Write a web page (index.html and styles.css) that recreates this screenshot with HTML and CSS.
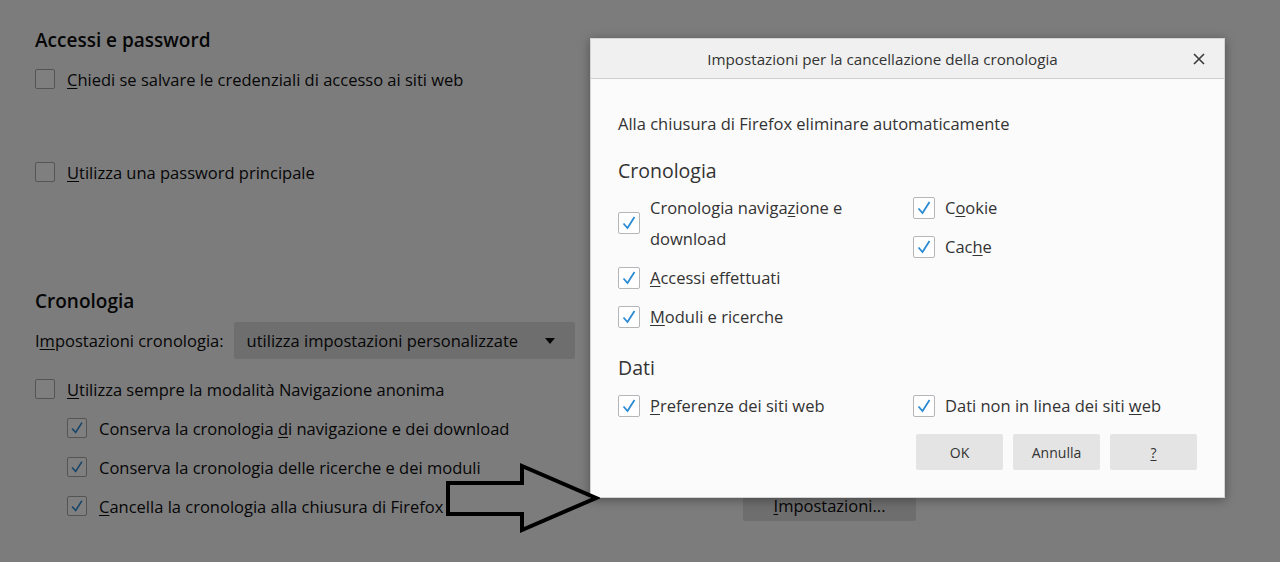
FILE: index.html
```html
<!DOCTYPE html>
<html lang="it">
<head>
    <meta charset="UTF-8">
    <title>Opzioni - Privacy e sicurezza</title>
    <link rel="stylesheet" href="styles.css">
</head>
<body>

<!-- Pagina delle opzioni (sotto la finestra modale) -->
<main class="prefs">
    <h2 class="section-title">Accessi e password</h2>
    <label class="check-row first">
        <span class="box"></span>
        <span><u>C</u>hiedi se salvare le credenziali di accesso ai siti web</span>
    </label>
    <label class="check-row master">
        <span class="box"></span>
        <span><u>U</u>tilizza una password principale</span>
    </label>

    <h2 class="section-title history">Cronologia</h2>
    <div class="history-mode">
        <span>I<u>m</u>postazioni cronologia:</span>
        <div class="select">
            <span>utilizza impostazioni personalizzate</span>
            <span class="caret"></span>
        </div>
    </div>
    <label class="check-row private">
        <span class="box"></span>
        <span><u>U</u>tilizza sempre la modalità Navigazione anonima</span>
    </label>
    <label class="check-row sub">
        <span class="box checked"><svg viewBox="0 0 20 20"><polyline points="4.5,10.5 8.5,15 15.5,4"/></svg></span>
        <span>Conserva la cronologia <u>d</u>i navigazione e dei download</span>
    </label>
    <label class="check-row sub">
        <span class="box checked"><svg viewBox="0 0 20 20"><polyline points="4.5,10.5 8.5,15 15.5,4"/></svg></span>
        <span>Conserva la cronolo<u>g</u>ia delle ricerche e dei moduli</span>
    </label>
    <div class="clear-row">
        <label class="check-row sub">
            <span class="box checked"><svg viewBox="0 0 20 20"><polyline points="4.5,10.5 8.5,15 15.5,4"/></svg></span>
            <span><u>C</u>ancella la cronologia alla chiusura di Firefox</span>
        </label>
        <button class="page-button"><u>I</u>mpostazioni...</button>
    </div>
</main>

<div class="overlay"></div>

<!-- Finestra modale -->
<div class="dialog">
    <div class="dialog-header">
        <span>Impostazioni per la cancellazione della cronologia</span>
        <svg class="close" width="12" height="12" viewBox="0 0 12 12"><path d="M1 1L11 11M11 1L1 11"/></svg>
    </div>
    <div class="dialog-body">
        <p class="intro">Alla chiusura di Firefox eliminare automaticamente</p>

        <h3 class="dialog-title">Cronologia</h3>
        <div class="columns">
            <div class="column">
                <label class="dlg-check">
                    <span class="box checked"><svg viewBox="0 0 20 20"><polyline points="4.5,10.5 8.5,15 15.5,4"/></svg></span>
                    <span>Cronologia naviga<u>z</u>ione e<br>download</span>
                </label>
                <label class="dlg-check">
                    <span class="box checked"><svg viewBox="0 0 20 20"><polyline points="4.5,10.5 8.5,15 15.5,4"/></svg></span>
                    <span><u>A</u>ccessi effettuati</span>
                </label>
                <label class="dlg-check">
                    <span class="box checked"><svg viewBox="0 0 20 20"><polyline points="4.5,10.5 8.5,15 15.5,4"/></svg></span>
                    <span><u>M</u>oduli e ricerche</span>
                </label>
            </div>
            <div class="column">
                <label class="dlg-check">
                    <span class="box checked"><svg viewBox="0 0 20 20"><polyline points="4.5,10.5 8.5,15 15.5,4"/></svg></span>
                    <span>C<u>o</u>okie</span>
                </label>
                <label class="dlg-check">
                    <span class="box checked"><svg viewBox="0 0 20 20"><polyline points="4.5,10.5 8.5,15 15.5,4"/></svg></span>
                    <span>Cac<u>h</u>e</span>
                </label>
            </div>
        </div>

        <h3 class="dialog-title data">Dati</h3>
        <div class="columns data">
            <div class="column">
                <label class="dlg-check">
                    <span class="box checked"><svg viewBox="0 0 20 20"><polyline points="4.5,10.5 8.5,15 15.5,4"/></svg></span>
                    <span><u>P</u>referenze dei siti web</span>
                </label>
            </div>
            <div class="column">
                <label class="dlg-check">
                    <span class="box checked"><svg viewBox="0 0 20 20"><polyline points="4.5,10.5 8.5,15 15.5,4"/></svg></span>
                    <span>Dati non in linea dei siti <u>w</u>eb</span>
                </label>
            </div>
        </div>

        <div class="dialog-buttons">
            <button class="dlg-button">OK</button>
            <button class="dlg-button">Annulla</button>
            <button class="dlg-button"><u>?</u></button>
        </div>
    </div>
</div>

<!-- Freccia disegnata sopra lo screenshot -->
<svg class="arrow" width="160" height="80" viewBox="440 460 160 80">
    <polygon points="448,483 522,483 522,466 596,498 522,530 522,514 448,514"/>
</svg>

</body>
</html>
```

FILE: styles.css
```css
body {
    margin: 0;
    width: 1280px;
    height: 562px;
    overflow: hidden;
    position: relative;
    background-color: #f9f9fa;
    color: #0c0c0d;
    font-family: "Open Sans", "Noto Sans", sans-serif;
    font-size: 16.5px;
}
u {
    text-decoration-thickness: 1px;
    text-underline-offset: 2px;
}

/* pagina */
.prefs {
    padding: 28px 0 0 35px;
    width: 881px;
}
.section-title {
    margin: 0;
    font-size: 19px;
    font-weight: 600;
    line-height: 24px;
}
.section-title.history {
    margin-top: 102px;
}
.check-row {
    display: flex;
    align-items: center;
    height: 30px;
    gap: 12px;
}
.check-row.first {
    margin-top: 12px;
}
.check-row.master {
    margin-top: 63px;
}
.check-row.private {
    margin-top: 15px;
}
.check-row.sub {
    margin-top: 9px;
    margin-left: 32px;
}
.box {
    width: 18px;
    height: 18px;
    border: 1px solid #a8a8ab;
    border-radius: 2px;
    background: #fff;
    flex: none;
    display: flex;
}
.box svg {
    width: 100%;
    height: 100%;
}
.box polyline {
    fill: none;
    stroke: #2b8bd3;
    stroke-width: 1.8;
}
.history-mode {
    display: flex;
    align-items: center;
    gap: 10px;
    margin-top: 9px;
}
.select {
    width: 341px;
    height: 37px;
    box-sizing: border-box;
    display: flex;
    align-items: center;
    justify-content: space-between;
    padding: 0 20px 0 13px;
    background: #dcdcde;
    border-radius: 2px;
}
.caret {
    width: 0;
    height: 0;
    border-left: 5px solid transparent;
    border-right: 5px solid transparent;
    border-top: 6px solid #0c0c0d;
}
.clear-row {
    display: flex;
    align-items: center;
    justify-content: space-between;
}
.page-button {
    width: 173px;
    height: 32px;
    margin-top: 7px;
    border: none;
    border-radius: 2px;
    background: #dcdcde;
    font: inherit;
    color: #0c0c0d;
}

.overlay {
    position: absolute;
    inset: 0;
    background: rgba(0, 0, 0, 0.5);
}

/* finestra */
.dialog {
    position: absolute;
    left: 590px;
    top: 38px;
    width: 635px;
    height: 460px;
    background: #fbfbfb;
    border: 1px solid #d4d4d4;
    box-sizing: border-box;
    box-shadow: 0 2px 10px rgba(0, 0, 0, 0.35);
    color: #333;
}
.dialog-header {
    position: relative;
    height: 40px;
    box-sizing: border-box;
    padding-right: 50px;
    border-bottom: 1px solid #cfcfd1;
    background: #f0f0f0;
    display: flex;
    align-items: center;
    justify-content: center;
    font-size: 15.2px;
}
.close {
    position: absolute;
    right: 19px;
    top: 14px;
}
.close path {
    stroke: #3a3a3a;
    stroke-width: 1.6;
}
.dialog-body {
    padding: 0 27px 0 27px;
}
.intro {
    margin: 34px 0 0;
    line-height: 22px;
}
.dialog-title {
    margin: 24px 0 0;
    font-size: 19.5px;
    font-weight: 500;
    line-height: 24px;
}
.dialog-title.data {
    margin-top: 24px;
}
.columns {
    display: grid;
    grid-template-columns: 295px 1fr;
    margin-top: 9px;
}
.columns.data {
    margin-top: 10px;
}
.column {
    display: flex;
    flex-direction: column;
    gap: 8px;
}
.dlg-check {
    display: flex;
    align-items: center;
    gap: 10px;
    line-height: 31px;
}
.dlg-check .box {
    width: 20px;
    height: 20px;
    border-color: #b6b6b8;
}
.dialog-buttons {
    display: flex;
    justify-content: flex-end;
    gap: 10px;
    margin-top: 13px;
}
.dlg-button {
    width: 87px;
    height: 36px;
    border: none;
    border-radius: 2px;
    background: #e4e4e4;
    font: inherit;
    font-size: 14px;
    color: #333;
}

.arrow {
    position: absolute;
    left: 440px;
    top: 460px;
}
.arrow polygon {
    fill: none;
    stroke: #000;
    stroke-width: 4;
    stroke-linejoin: miter;
}
```
